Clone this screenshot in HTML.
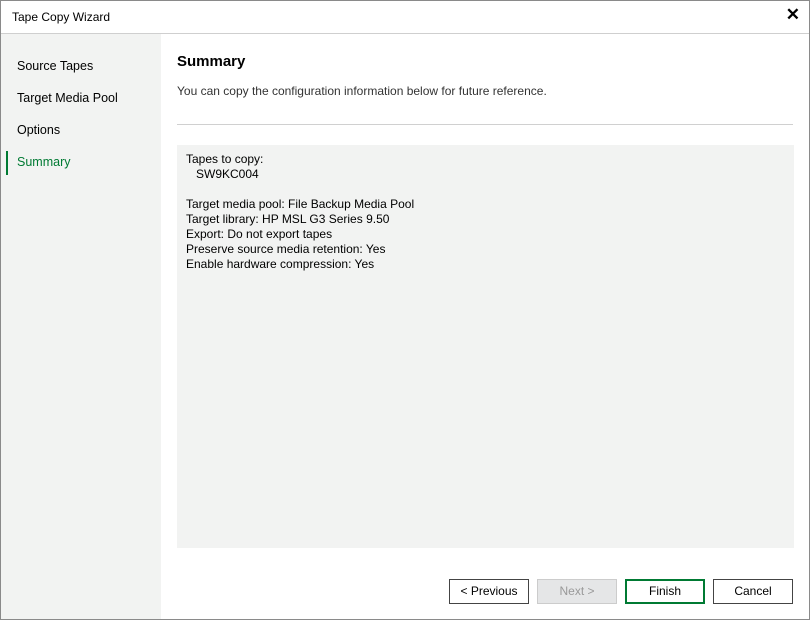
<html><head><style>
body{margin:0;width:810px;height:620px;overflow:hidden;font-family:"Segoe UI","Liberation Sans",sans-serif;font-size:12px;color:#000;}
.win{position:absolute;left:0;top:0;width:808px;height:618px;border:1px solid #8a8a8a;background:#fff;}
.t{position:absolute;left:11px;top:9px;font-size:12px;}
.x{position:absolute;right:9px;top:4px;font-size:17px;font-weight:bold;}
.sep{position:absolute;left:0;top:32px;width:808px;height:1px;background:#cfcfcf;}
.side{position:absolute;left:0;top:33px;width:160px;height:585px;background:#f2f3f2;}
.side div{position:absolute;left:16px;font-size:12.5px;}
.bar{position:absolute;left:5px;top:150px;width:2px;height:24px;background:#007a33;}
h1{position:absolute;left:176px;top:52px;margin:0;font-size:15px;font-weight:bold;}
.sub{position:absolute;left:176px;top:83px;color:#333;}
.hr{position:absolute;left:176px;top:123px;width:616px;height:1px;background:#d0d0d0;}
.box{position:absolute;left:176px;top:144px;width:617px;height:403px;background:#f2f3f2;}
.box pre{margin:0;position:absolute;left:9px;top:7px;font-family:inherit;font-size:12px;line-height:15px;}
.b{position:absolute;top:578px;width:78px;height:23px;border:1px solid #444;text-align:center;line-height:23px;font-size:12px;background:#fff;box-sizing:content-box;}
</style></head><body><div class="win">
<div class="t">Tape Copy Wizard</div><div class="x">✕</div>
<div class="sep"></div>
<div class="side">
<div style="top:25px">Source Tapes</div>
<div style="top:57px">Target Media Pool</div>
<div style="top:89px">Options</div>
<div style="top:121px;color:#007a33">Summary</div>
</div>
<div class="bar"></div>
<h1>Summary</h1>
<div class="sub">You can copy the configuration information below for future reference.</div>
<div class="hr"></div>
<div class="box"><pre>Tapes to copy:
   SW9KC004

Target media pool: File Backup Media Pool
Target library: HP MSL G3 Series 9.50
Export: Do not export tapes
Preserve source media retention: Yes
Enable hardware compression: Yes</pre></div>
<div class="b" style="left:448px">&lt; Previous</div>
<div class="b" style="left:536px;background:#e5e6e7;border-color:#ccc;color:#999">Next &gt;</div>
<div class="b" style="left:624px;border:2px solid #007a33;width:76px;height:21px;line-height:21px">Finish</div>
<div class="b" style="left:712px">Cancel</div>
</div></body></html>
